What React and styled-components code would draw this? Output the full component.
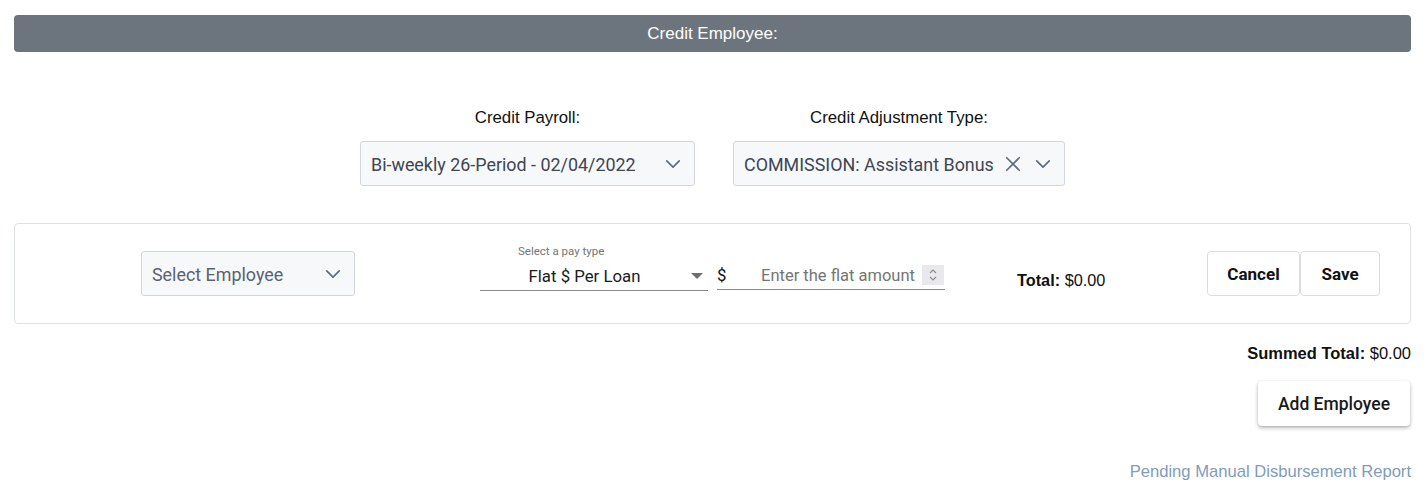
import styled, { createGlobalStyle } from "styled-components";

const GlobalStyle = createGlobalStyle`
  body {
    margin: 0;
    background: #fff;
    font-family: "Liberation Sans", Arial, sans-serif;
  }
`;

function Chevron() {
  return (
    <svg width="18" height="18" viewBox="0 0 20 20" fill="none">
      <path d="M3 6.5l7 7 7-7" stroke="#5b6b7b" strokeWidth="1.8" strokeLinecap="round" strokeLinejoin="round" />
    </svg>
  );
}

function Cross() {
  return (
    <svg width="18" height="18" viewBox="0 0 20 20" fill="none">
      <path d="M3 3l14 14M17 3L3 17" stroke="#5b6b7b" strokeWidth="1.8" strokeLinecap="round" />
    </svg>
  );
}

export default function App() {
  return (
    <Page>
      <GlobalStyle />
      <HeaderBar>Credit Employee:</HeaderBar>

      <TopRow>
        <Field>
          <FieldLabel>Credit Payroll:</FieldLabel>
          <SelectBox $width={335}>
            <SelectText>Bi-weekly 26-Period - 02/04/2022</SelectText>
            <Icons>
              <Chevron />
            </Icons>
          </SelectBox>
        </Field>
        <Field>
          <FieldLabel>Credit Adjustment Type:</FieldLabel>
          <SelectBox $width={332}>
            <SelectText>COMMISSION: Assistant Bonus</SelectText>
            <Icons>
              <Cross />
              <Chevron />
            </Icons>
          </SelectBox>
        </Field>
      </TopRow>

      <Card>
        <EmployeeCell>
          <SelectBox $width={214}>
            <SelectText $placeholder>Select Employee</SelectText>
            <Icons>
              <Chevron />
            </Icons>
          </SelectBox>
        </EmployeeCell>

        <PayType>
          <SmallLabel>Select a pay type</SmallLabel>
          <Underlined $width={228}>
            <PayValue>Flat $ Per Loan</PayValue>
            <Caret />
          </Underlined>
        </PayType>

        <Amount>
          <Underlined $width={228}>
            <Dollar>$</Dollar>
            <AmountInput>Enter the flat amount</AmountInput>
            <Spinner>
              <svg width="10" height="16" viewBox="0 0 10 16" fill="none">
                <path d="M2 6l3-3 3 3M2 10l3 3 3-3" stroke="#8a8a8a" strokeWidth="1.1" />
              </svg>
            </Spinner>
          </Underlined>
        </Amount>

        <Total>
          <b>Total:</b> $0.00
        </Total>

        <ButtonGroup>
          <CardButton $width={93}>Cancel</CardButton>
          <CardButton $width={80}>Save</CardButton>
        </ButtonGroup>
      </Card>

      <Summary>
        <b>Summed Total:</b> $0.00
      </Summary>

      <AddRow>
        <AddButton>Add Employee</AddButton>
      </AddRow>

      <LinkRow>
        <ReportLink href="#">Pending Manual Disbursement Report</ReportLink>
      </LinkRow>
    </Page>
  );
}

const Page = styled.div`
  padding: 15px 17px 0 14px;
  width: 1397px;
`;

const HeaderBar = styled.div`
  height: 37px;
  background: #6c757d;
  border-radius: 4px;
  color: #fff;
  font-size: 17px;
  display: flex;
  align-items: center;
  justify-content: center;
`;

const TopRow = styled.div`
  display: flex;
  justify-content: center;
  gap: 38px;
  margin-top: 56px;
`;

const Field = styled.div`
  display: flex;
  flex-direction: column;
  align-items: center;
`;

const FieldLabel = styled.div`
  font-size: 16.8px;
  color: #111;
  line-height: 20px;
  margin-bottom: 13px;
`;

const SelectBox = styled.div`
  width: ${(p) => p.$width}px;
  height: 45px;
  box-sizing: border-box;
  background: #f7f8fa;
  border: 1px solid #d3d7dd;
  border-radius: 3px;
  display: flex;
  align-items: center;
  padding: 0 10px 0 10px;
`;

const SelectText = styled.div`
  flex: 1;
  font-family: Roboto, sans-serif;
  font-size: 17.9px;
  padding-top: 2px;
  color: ${(p) => (p.$placeholder ? "#59636e" : "#3d4652")};
  white-space: nowrap;
  overflow: hidden;
`;

const Icons = styled.div`
  display: flex;
  align-items: center;
  gap: 12px;
  padding-right: 2px;
`;

const Card = styled.div`
  margin-top: 37px;
  height: 101px;
  box-sizing: border-box;
  border: 1px solid #dee2e6;
  border-radius: 4px;
  display: flex;
  align-items: center;
`;

const EmployeeCell = styled.div`
  margin-left: 126px;
`;

const PayType = styled.div`
  margin-left: 125px;
  display: flex;
  flex-direction: column;
  align-items: stretch;
  padding-bottom: 13px;
`;

const SmallLabel = styled.div`
  font-family: Roboto, sans-serif;
  font-size: 11.5px;
  color: #757575;
  padding-left: 38px;
  margin-bottom: 4px;
`;

const Underlined = styled.div`
  width: ${(p) => p.$width}px;
  height: 29px;
  box-sizing: border-box;
  border-bottom: 1px solid #8c8c8c;
  display: flex;
  align-items: center;
`;

const PayValue = styled.div`
  flex: 1;
  text-align: center;
  font-family: Roboto, sans-serif;
  font-size: 16.8px;
  color: #1b1b1b;
  padding-right: 2px;
`;

const Caret = styled.span`
  width: 0;
  height: 0;
  border-left: 6px solid transparent;
  border-right: 6px solid transparent;
  border-top: 6px solid #6f6f6f;
  margin-right: 5px;
`;

const Amount = styled.div`
  margin-left: 9px;
  padding-top: 4px;
`;

const Dollar = styled.span`
  font-family: Roboto, sans-serif;
  font-size: 16.8px;
  color: #111;
  width: 44px;
`;

const AmountInput = styled.span`
  flex: 1;
  font-family: Roboto, sans-serif;
  font-size: 16.5px;
  color: #757575;
  white-space: nowrap;
`;

const Spinner = styled.span`
  width: 22px;
  height: 20px;
  background: #e9e9ed;
  display: flex;
  align-items: center;
  justify-content: center;
  margin-right: 1px;
`;

const Total = styled.div`
  margin-left: 72px;
  padding-top: 13px;
  font-size: 16.3px;
  color: #111;
  width: 190px;
`;

const ButtonGroup = styled.div`
  display: flex;
`;

const CardButton = styled.button`
  width: ${(p) => p.$width}px;
  height: 45px;
  background: #fff;
  border: 1px solid #dcdcdc;
  border-radius: 4px;
  font-family: Roboto, sans-serif;
  font-weight: 700;
  font-size: 17px;
  color: #111;
  cursor: pointer;
`;

const Summary = styled.div`
  margin-top: 20px;
  text-align: right;
  font-size: 16.5px;
  color: #111;
`;

const AddRow = styled.div`
  display: flex;
  justify-content: flex-end;
  margin-top: 18px;
`;

const AddButton = styled.button`
  width: 152px;
  height: 45px;
  margin-right: 1px;
  background: #fff;
  border: none;
  border-radius: 4px;
  box-shadow: 0 2px 4px rgba(0, 0, 0, 0.25), 0 1px 2px rgba(0, 0, 0, 0.12);
  font-family: Roboto, sans-serif;
  font-weight: 500;
  font-size: 17.5px;
  color: #1a1a1a;
  cursor: pointer;
`;

const LinkRow = styled.div`
  display: flex;
  justify-content: flex-end;
  margin-top: 36px;
`;

const ReportLink = styled.a`
  font-size: 16.6px;
  color: #7f9cba;
  text-decoration: none;
`;
